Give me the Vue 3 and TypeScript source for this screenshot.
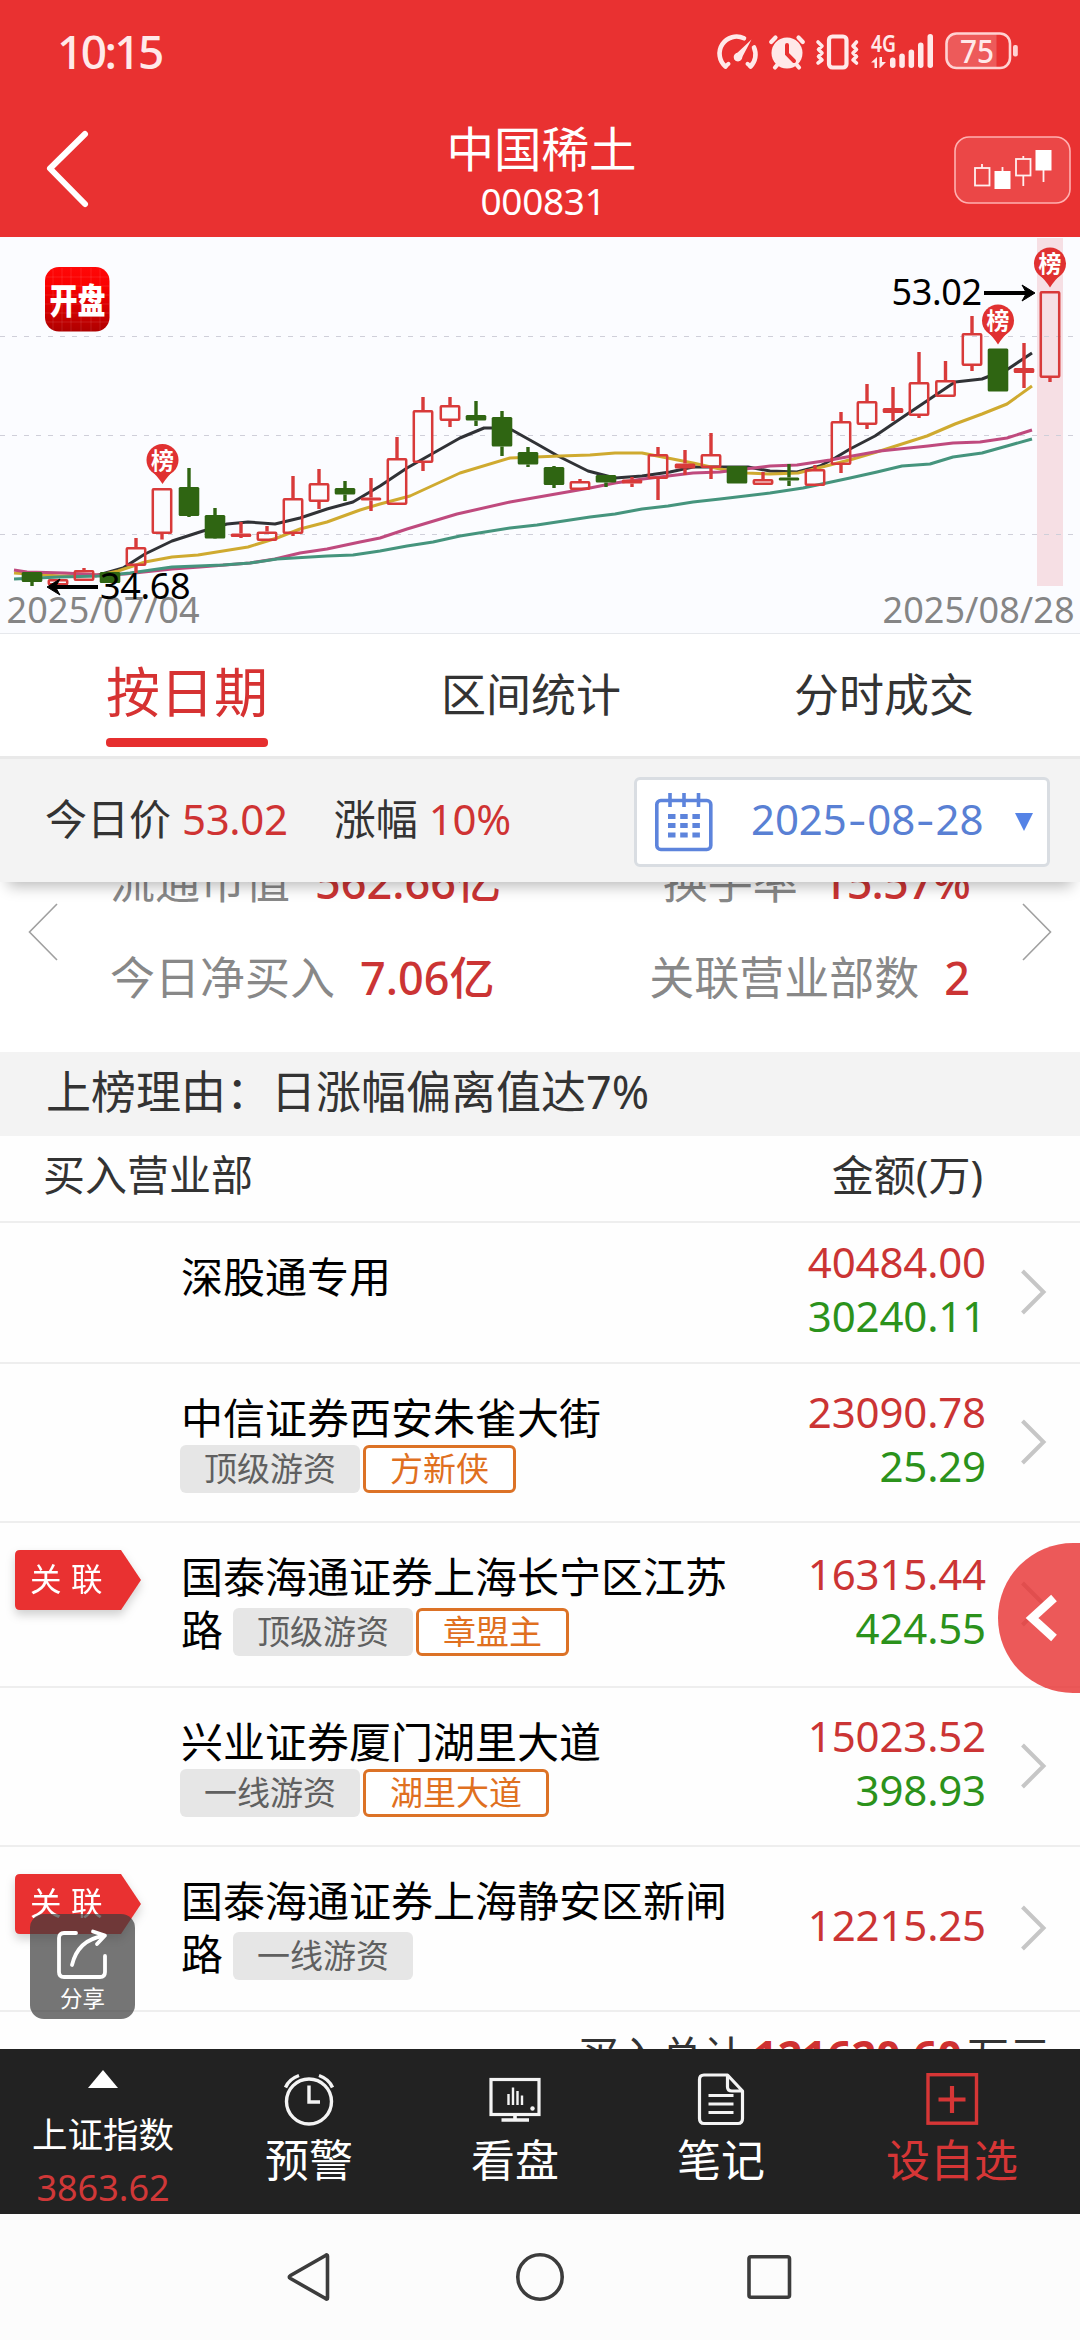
<script setup lang="ts">
type Kind = 'up' | 'down'
interface Candle { x: number; kind: Kind; top: number; bottom: number; high: number; low: number; flat?: boolean }

const c = (x: number, kind: Kind, top: number, bottom: number, high = top, low = bottom): Candle =>
  ({ x, kind, top, bottom, high, low, flat: bottom - top < 6 })

const candles: Candle[] = [
  c(32, 'down', 572, 582, 572, 586), c(58, 'up', 579, 585.5), c(84, 'up', 570, 581, 568, 581),
  c(110, 'down', 572, 583), c(136, 'up', 547, 566, 538, 573), c(162, 'up', 488, 534, 488, 539.5),
  c(189, 'down', 487, 516, 468, 517), c(215, 'down', 515, 538.5, 508, 539), c(241, 'up', 533.5, 537, 522, 538),
  c(267, 'up', 531.5, 541, 526, 541), c(293, 'up', 498, 534, 476, 536), c(319, 'up', 483, 502, 469, 509),
  c(345, 'down', 488, 494.5, 481, 501), c(371, 'up', 497.5, 500.5, 478, 511), c(397, 'up', 458, 505, 437, 505),
  c(423, 'up', 410, 463, 397, 471), c(450, 'up', 405, 421, 397, 427), c(476, 'down', 415, 420.5, 401, 426),
  c(502, 'down', 417, 446.5, 411, 456), c(528, 'down', 452, 464.5, 447, 467), c(554, 'down', 467, 485, 466, 488),
  c(580, 'up', 481, 490, 479, 490), c(606, 'down', 475, 482.5, 475, 487), c(632, 'up', 479.5, 483.5, 477, 487),
  c(658, 'up', 454, 479, 447, 500), c(685, 'up', 463.5, 468.5, 450, 475), c(711, 'up', 454, 468, 433, 479),
  c(737, 'down', 466, 483.5), c(763, 'up', 479, 485, 472, 485), c(789, 'down', 477.5, 480.5, 464, 486),
  c(815, 'up', 469, 486, 465, 486), c(841, 'up', 421, 465, 412, 473), c(867, 'up', 401, 425, 384, 429),
  c(893, 'up', 408, 413, 387, 421), c(919, 'up', 382, 416, 352, 418), c(945.5, 'up', 380, 397, 361, 397),
  c(972, 'up', 333, 366, 316, 371), c(998, 'down', 348.5, 391.5), c(1024, 'up', 368, 373, 343, 388),
  c(1050, 'up', 291, 378, 291, 382),
]

const averages = [
  { color: '#303236', points: '95,576 123,568 145,554 172,541 203,531 227,524 248,522 275,524 300,518 327,509 353,502 380,486 407,468 460,438 484,428 493,428 512,430 537,444 558,456 588,471 615,478 642,476 670,472 693,467 720,467 748,467 770,471 797,472 820,466 835,458 850,449 875,436 900,419 955,382 982,379 1008,369 1032,353' },
  { color: '#cfaa30', points: '14,573 60,576 100,575 118,571 145,562 172,557 198,555 248,547 277,538 300,529 327,522 360,510 380,504 410,496 460,473 510,458 560,456 590,455 615,453 642,453 693,463 720,469 747,473 770,474 798,473 830,465 853,459 880,451 927,436 955,424 982,414 1007,404 1032,386' },
  { color: '#bf4a7e', points: '14,570 27,572 65,573 100,575 125,574 172,569 200,567 250,563 275,559 300,553 327,549 360,542 380,538 407,529 457,514 510,502 590,488 615,483 643,479 693,473 720,472 770,466 797,465 830,460 880,451 928,446 953,443 980,442 1007,438 1032,430' },
  { color: '#45947d', points: '14,579 60,577 100,576 130,573 172,567 223,565 250,563 277,559 327,556 353,555 380,551 407,546 433,542 460,536 510,528 537,525 590,517 615,514 642,509 668,506 693,502 720,499 770,493 803,488 850,478 877,472 902,466 930,464 953,457 982,453 1007,446 1032,439' },
]

const pins = [{ x: 162.5, y: 460 }, { x: 998, y: 320.5 }, { x: 1050, y: 263.5 }]

interface Office { name: string; tail?: string; linked?: boolean; rank?: string; trader?: string; buy: string; sell?: string; height: number }
const offices: Office[] = [
  { name: '深股通专用', buy: '40484.00', sell: '30240.11', height: 141 },
  { name: '中信证券西安朱雀大街', rank: '顶级游资', trader: '方新侠', buy: '23090.78', sell: '25.29', height: 159 },
  { name: '国泰海通证券上海长宁区江苏', tail: '路', linked: true, rank: '顶级游资', trader: '章盟主', buy: '16315.44', sell: '424.55', height: 165 },
  { name: '兴业证券厦门湖里大道', rank: '一线游资', trader: '湖里大道', buy: '15023.52', sell: '398.93', height: 159 },
  { name: '国泰海通证券上海静安区新闸', tail: '路', linked: true, rank: '一线游资', buy: '12215.25', height: 165 },
]
</script>

<template>
  <div class="screen">
    <header class="top">
      <div class="status">
        <span class="time">10:15</span>
        <div class="sys">
          <svg class="gauge" width="40" height="36" viewBox="0 0 40 36" fill="none" stroke="#ffe9e9" stroke-width="4.6" stroke-linecap="round">
            <path d="M7.500 32.500 A17 17 0 0 1 26 4.300" /><path d="M36 13.500 A17 17 0 0 1 32.500 32.500" /><path d="M7.500 32.500 L10.500 29.800 M32.500 32.500 L29.500 29.800" stroke-width="4" />
            <path d="M33.500 5.500 L23.500 24.500 A3.800 3.800 0 1 1 17.500 20.500 Z" fill="#ffe9e9" stroke="none" />
            <circle cx="20" cy="23" r="4.300" fill="#ffe9e9" stroke="none" />
          </svg>
          <svg class="alarm" width="36" height="36" viewBox="0 0 36 36" fill="none" stroke="#ffe9e9" stroke-width="4.200" stroke-linecap="round">
            <circle cx="18" cy="19" r="15.500" fill="#ffe9e9" stroke="none" /><path d="M2.200 8 L6.500 3.500 M33.800 8 L29.500 3.500 M6 33.500 L9 30 M30 33.500 L27 30" />
            <path d="M18 11 V20 L25 27" stroke="#e93131" stroke-width="4" />
          </svg>
          <svg class="vibrate" width="43" height="36" viewBox="0 0 43 36" fill="none" stroke="#ffe9e9" stroke-width="3.600" stroke-linecap="round" stroke-linejoin="round">
            <rect x="13" y="2.500" width="17.500" height="31" rx="3.500" stroke-width="4.200" />
            <path d="M2 8 L6 12 L2.500 15.500 L6 19 L2.500 22.500 L6 26 L2 29 M40.500 8 L37 12 L40.500 15.500 L37 19 L40.500 22.500 L37 26 L40.500 29" />
          </svg>
          <svg class="signal" width="63" height="36" viewBox="0 0 63 36" fill="#ffe9e9">
            <text x="0" y="17.500" class="net" textLength="25" lengthAdjust="spacingAndGlyphs">4G</text>
            <path d="M0 28.500 L6 23 V34 H3.500 V28.500 Z M8.500 23 H11 V28 H15 L9 34 H8.500 Z" />
            <rect x="19" y="23.500" width="5.500" height="10.500" rx="2.700" /><rect x="28.300" y="19.500" width="5.500" height="14.500" rx="2.700" />
            <rect x="37.600" y="15.500" width="5.500" height="18.500" rx="2.700" /><rect x="47" y="8.500" width="5.500" height="25.500" rx="2.700" />
            <rect x="56.500" y="0" width="5.500" height="34" rx="2.700" />
          </svg>
          <svg class="battery" width="74" height="38" viewBox="0 0 74 38">
            <path d="M12 2 H51.500 V36 H12 A10 10 0 0 1 2 26 V12 A10 10 0 0 1 12 2 Z" fill="#fff" opacity=".2" />
            <rect x="1.500" y="1.500" width="63.500" height="34.500" rx="10" fill="none" stroke="#ffd2d2" stroke-width="2.600" />
            <rect x="68" y="13" width="4.800" height="11.500" rx="2" fill="#ffd2d2" />
            <text x="15" y="30.500" class="level" textLength="34" lengthAdjust="spacingAndGlyphs">75</text>
          </svg>
        </div>
      </div>
      <div class="title-bar">
        <svg class="back" width="46" height="80" viewBox="0 0 46 80"><path d="M40 5 L5 39.500 L40 75" fill="none" stroke="#fff" stroke-width="6" stroke-linecap="round" stroke-linejoin="round" /></svg>
        <div class="stock"><h1>中国稀土</h1><p>000831</p></div>
        <svg class="kline" width="117" height="68" viewBox="0 0 117 68">
          <rect x="1" y="1" width="115" height="66" rx="14" fill="#fff" fill-opacity=".11" stroke="#ffb0b0" stroke-width="1.600" />
          <g fill="none" stroke="#fff0f0" stroke-width="1.800"><rect x="21" y="32" width="14.500" height="17.500" /><path d="M28 28 V32" /><rect x="62" y="23" width="14.500" height="16.500" /><path d="M69.300 20 V23 M69.300 39.500 V50 M48.500 31 V36 M89.500 30 V46" /></g>
          <rect x="40.500" y="35" width="16" height="18" fill="#fff" /><rect x="81.500" y="14" width="16" height="20.500" fill="#fff" />
        </svg>
      </div>
    </header>

    <section class="chart">
      <svg width="1080" height="397" viewBox="0 237 1080 397">
        <defs>
          <linearGradient id="logo" x1="0" y1="0" x2="0" y2="1"><stop offset="0" stop-color="#ff0808" /><stop offset=".3" stop-color="#fa0000" /><stop offset="1" stop-color="#ae0000" /></linearGradient>
        </defs>
        <rect x="1037" y="238" width="26" height="348" fill="#f6dfe4" />
        <path d="M0 336.500 H1075 M0 435.500 H1075 M0 534.500 H1075" stroke="#cfcfd9" stroke-width="1.200" stroke-dasharray="5 7" />
        <rect x="45" y="267" width="64.500" height="64.500" rx="14" fill="url(#logo)" />
        <path d="M53 269 V330 M62 268 V331 M71 268 V331 M81 268 V331 M91 268 V331 M100 269 V330 M46 277 H109 M45 286 H109 M45 295 H109 M45 304 H109 M45 313 H109 M46 322 H109" stroke="#fff" stroke-opacity=".1" stroke-width="1" />
        <g transform="translate(77.500 313.500) scale(1 1.270)"><text class="logo-text" text-anchor="middle">开盘</text></g>
        <polyline v-for="a in averages" :key="a.color" :points="a.points" :stroke="a.color" fill="none" stroke-width="3" stroke-linejoin="round" />
        <g v-for="k in candles" :key="k.x" :stroke="k.kind === 'up' ? '#d83a3a' : '#2f6512'" fill="none">
          <path :d="`M${k.x} ${k.high} V${k.top} M${k.x} ${k.bottom} V${k.low}`" stroke-width="3.400" />
          <rect v-if="k.kind === 'up' && !k.flat" :x="k.x - 9.200" :y="k.top + 1.200" width="18.400" :height="k.bottom - k.top - 2.400" rx=".8" stroke-width="2.500" />
          <rect v-else :x="k.x - 10.300" :y="k.top" width="20.600" :height="k.bottom - k.top" rx="1.500" :fill="k.kind === 'up' ? '#d83a3a' : '#2f6512'" stroke="none" />
        </g>
        <g v-for="p in pins" :key="p.x">
          <path :d="`M${p.x - 13.500} ${p.y + 8.500} Q${p.x - 5} ${p.y + 16} ${p.x} ${p.y + 24} Q${p.x + 5} ${p.y + 16} ${p.x + 13.500} ${p.y + 8.500} Z`" fill="#e03131" />
          <circle :cx="p.x" :cy="p.y" r="16" fill="#e03131" />
          <text :x="p.x" :y="p.y + 8.500" text-anchor="middle" class="pin-text">榜</text>
        </g>
        <g fill="none" stroke="#000" stroke-width="3.800"><path d="M98 587 H51" /><path d="M984 293 H1031" /></g>
        <path d="M47 587 L60 579 L55.500 587 L60 595 Z M1035 293 L1022 285 L1026.500 293 L1022 301 Z" stroke="#000" stroke-width="1" />
        <text x="6.500" y="622.500" class="date" textLength="193">2025/07/04</text>
        <text x="882.500" y="622.500" class="date" textLength="192">2025/08/28</text>
        <text x="100" y="598.500" class="price" textLength="90.500">34.68</text>
        <text x="891.500" y="304.500" class="price" textLength="90.500">53.02</text>
      </svg>
    </section>

    <nav class="tabs"><span class="on">按日期</span><span>区间统计</span><span>分时成交</span></nav>

    <section class="summary">
      <p>今日价 <b>53.02</b></p><p class="rise">涨幅 <b>10%</b></p>
      <div class="picker">
        <svg width="60" height="60" viewBox="0 0 60 60" fill="none" stroke="#5d84dc" stroke-width="3.600">
          <rect x="2.800" y="8.500" width="54" height="49" rx="4" /><path d="M16 1 V15 M30 1 V15 M44.500 1 V15" />
          <path d="M14 24.500 H58 M14 33.500 H58 M14 43 H58" stroke-width="5.200" stroke-dasharray="7.500 4.700 7.500 4.700 7.500 30" />
        </svg>
        <span class="day">2025<i>-</i>08<i>-</i>28</span>
        <svg width="18" height="18" viewBox="0 0 18 18"><path d="M0 0 H18 L9 18 Z" fill="#5583e6" /></svg>
      </div>
    </section>

    <section class="stats">
      <svg width="30" height="60" viewBox="0 0 30 60"><path d="M29 2 L1.500 30 L29 58" fill="none" stroke="#a0a0a0" stroke-width="1.600" /></svg>
      <div class="cols">
        <div><p>流通市值<b>562.66亿</b></p><p>今日净买入<b>7.06亿</b></p></div>
        <div class="right"><p>换手率<b class="ratio">15.57%</b></p><p>关联营业部数<b>2</b></p></div>
      </div>
      <svg width="30" height="60" viewBox="0 0 30 60"><path d="M1 2 L28.500 30 L1 58" fill="none" stroke="#a0a0a0" stroke-width="1.600" /></svg>
    </section>

    <section class="reason">上榜理由：日涨幅偏离值达7%</section>
    <div class="thead"><span>买入营业部</span><span>金额(万)</span></div>

    <main class="list">
      <article v-for="o in offices" :key="o.name" class="row" :style="{ height: o.height + 'px' }">
        <div class="mark">
          <div v-if="o.linked" class="flag">
            <svg width="126" height="60" viewBox="0 0 126 60"><path d="M5 0 H106 L126 30 L106 60 H5 Q0 60 0 55 V5 Q0 0 5 0 Z" fill="#e93131" /></svg>
            <span>关联</span>
          </div>
        </div>
        <div class="office">
          <div class="name">{{ o.name }}</div>
          <div v-if="o.rank" class="tags" :class="{ wrapped: o.tail }">
            <span v-if="o.tail" class="tail">{{ o.tail }}</span>
            <span class="tag">{{ o.rank }}</span>
            <span v-if="o.trader" class="tag trader">{{ o.trader }}</span>
          </div>
        </div>
        <div class="money"><span class="buy">{{ o.buy }}</span><span v-if="o.sell" class="sell">{{ o.sell }}</span></div>
        <svg class="more" width="28" height="46" viewBox="0 0 28 46"><path d="M2.500 2 L23.500 23 L2.500 44" fill="none" stroke="#c6c6c6" stroke-width="4" /></svg>
      </article>
      <div class="total">买入总计<b>121620.60</b>万元</div>
      <button class="drawer" aria-label="展开">
        <svg width="82" height="150" viewBox="0 0 82 150"><path d="M56 55 L34 75 L56 95" fill="none" stroke="#fff" stroke-width="8.500" /></svg>
      </button>
      <button class="share">
        <svg width="54" height="52" viewBox="0 0 54 52" fill="none" stroke="#fff" stroke-width="3.800" stroke-linecap="round" stroke-linejoin="round">
          <path d="M20 4 H8 Q3 4 3 9 V43 Q3 48 8 48 H44 Q49 48 49 43 V27" /><path d="M16 36 Q22 11 47 7" /><path d="M37 2.500 L49 6.500 L41 15" />
        </svg>
        <span>分享</span>
      </button>
    </main>

    <footer class="dock">
      <div class="index"><svg width="30" height="18" viewBox="0 0 30 18"><path d="M0 18 L15 0 L30 18 Z" fill="#fff" /></svg><span>上证指数</span><b>3863.62</b></div>
      <div class="item">
        <svg width="54" height="54" viewBox="0 0 54 54" fill="none" stroke="#f4f4f4" stroke-width="3.400">
          <circle cx="27" cy="29.500" r="22.500" /><path d="M27 13.500 V30 H38" /><path d="M3.500 15.500 Q7 7 17 3.500 M50.500 15.500 Q47 7 37 3.500" />
        </svg><span>预警</span>
      </div>
      <div class="item">
        <svg width="54" height="54" viewBox="0 0 54 54" fill="none" stroke="#f4f4f4" stroke-width="3.200">
          <rect x="3" y="7.500" width="48" height="35" /><path d="M27 42 V47 M13.500 48 H41" stroke-width="3.600" /><path d="M20.500 22 V33 M25 15.500 V33 M29.500 19 V33 M34 23.500 V33" stroke-width="2.400" /><circle cx="44.500" cy="36.500" r="2.200" fill="#f4f4f4" stroke="none" />
        </svg><span>看盘</span>
      </div>
      <div class="item">
        <svg width="54" height="54" viewBox="0 0 54 54" fill="none" stroke="#f4f4f4" stroke-width="3.200" stroke-linejoin="round">
          <path d="M10 3 H33.500 L48.500 19 V46.500 Q48.500 51.500 44 51.500 H10 Q5.500 51.500 5.500 46.500 V7.500 Q5.500 3 10 3 Z M33.500 3 V15 Q33.500 19 38 19 H48.500" /><path d="M14.500 23.500 H39.500 M14.500 32 H39.500 M14.500 40.500 H39.500" />
        </svg><span>笔记</span>
      </div>
      <div class="item add">
        <svg width="54" height="54" viewBox="0 0 54 54" fill="none" stroke="#d63636" stroke-width="3.400"><rect x="3" y="2.700" width="48.500" height="48.500" /><path d="M27 14 V41 M13.500 27.500 H40.500" stroke-width="4.200" /></svg><span>设自选</span>
      </div>
    </footer>
    <div class="sysnav">
      <svg width="50" height="50" viewBox="0 0 50 50"><path d="M41.500 4 V46 Q41.500 48 39.500 46.500 L4.500 26.500 Q2 25 4.500 23.500 L39.500 3.500 Q41.500 2 41.500 4 Z" fill="none" stroke="#3c3c3c" stroke-width="3.600" /></svg>
      <svg width="50" height="50" viewBox="0 0 50 50"><circle cx="25" cy="25" r="22.200" fill="none" stroke="#3c3c3c" stroke-width="3.600" /></svg>
      <svg width="50" height="50" viewBox="0 0 50 50"><rect x="5" y="4.800" width="40.500" height="40.500" rx="2" fill="none" stroke="#3c3c3c" stroke-width="3.600" /></svg>
    </div>
  </div>
</template>

<style>
body { margin: 0; background: #fff; }
</style>

<style scoped>
* { box-sizing: border-box; }
h1, p { margin: 0; font-weight: 400; }
b, i { font-weight: 400; font-style: normal; }
svg { display: block; flex: none; }
button { border: 0; padding: 0; font: inherit; }
.screen { width: 1080px; height: 2340px; display: flex; flex-direction: column; overflow: hidden; background: #fefefe; font-family: "Noto Sans", "Noto Sans CJK SC", sans-serif; color: #333; white-space: nowrap; }
.screen > * { flex: none; }

.top { height: 237px; background: #e93131; color: #fff; display: flex; flex-direction: column; }
.status { height: 104px; padding: 0 61px 0 57px; display: flex; align-items: center; justify-content: space-between; }
.time { font-size: 46px; font-weight: 500; line-height: 60px; margin-bottom: 2px; letter-spacing: -2.600px; color: #ffe9e9; }
.sys { display: flex; align-items: flex-start; height: 38px; margin-bottom: 3px; }
.sys svg { overflow: visible; }
.gauge, .alarm, .signal { margin: 2px 11px 0 0; }
.vibrate { margin: 2px 12px 0 0; }
.net { font-size: 24px; font-weight: 600; }
.level { font-size: 33px; font-weight: 500; fill: #ffe9e9; }
.title-bar { height: 132px; padding: 0 9px 0 45px; display: flex; align-items: flex-start; }
.back { margin-top: 25px; }
.stock { flex: 1; margin: 12px 0 0 41px; text-align: center; }
.stock h1 { font-size: 47.500px; line-height: 66px; margin-left: -3px; }
.stock p { font-size: 37px; line-height: 38px; letter-spacing: -.3px; }
.kline { margin-top: 32px; }

.chart { height: 397px; background: #fbfcff; border-bottom: 1px solid #e6e8ec; overflow: hidden; }
.logo-text { font-size: 28px; font-weight: 900; fill: #fff; }
.pin-text { font-size: 23px; font-weight: 700; fill: #fff; }
.date { font-size: 36px; fill: #858585; }
.price { font-size: 36px; fill: #000; }

.tabs { height: 122px; padding: 0 106px; display: flex; justify-content: space-between; background: #fff; font-size: 45px; line-height: 121px; }
.tabs .on { height: 113px; line-height: 116px; font-size: 54px; color: #d63232; position: relative; }
.tabs .on::after { content: ""; position: absolute; left: 0; right: 0; bottom: 0; height: 9px; border-radius: 4px; background: #e62f2f; }

.summary { height: 126px; padding: 0 30px 0 45px; display: flex; align-items: center; background: #f3f3f3; border-top: 3px solid #e9e9e9; font-size: 42px; line-height: 60px; position: relative; z-index: 1; box-shadow: 0 12px 14px -8px rgba(0, 0, 0, .28); }
.summary p { margin-bottom: 4px; }
.summary b { color: #cf3333; letter-spacing: -.3px; }
.summary .rise { margin-left: 46px; }
.picker { margin: 2px 0 0 auto; width: 416px; height: 90px; border: 3px solid #d9dde2; border-radius: 6px; background: #fff; display: flex; align-items: center; padding: 0 14px 0 17px; color: #5980d4; }
.picker .day { margin: 0 auto 5px 37px; letter-spacing: -.1px; }
.day i { display: inline-block; width: 20.500px; text-align: center; transform: scaleX(1.350); }

.stats { height: 170px; padding: 0 28px; display: flex; align-items: flex-start; background: #fff; }
.stats > svg { margin-top: 20px; }
.cols { flex: 1; display: flex; justify-content: space-between; margin-top: -48px; padding: 0 52px; font-size: 45px; line-height: 96px; color: #888; }
.right { text-align: right; }
.cols b { margin-left: 25px; color: #cb3434; font-weight: 500; }
.cols b.ratio { margin-left: 24px; letter-spacing: -.900px; }

.reason { height: 84px; padding-left: 46px; background: #f3f3f3; font-size: 45px; line-height: 80px; }
.thead { height: 87px; padding: 0 97px 0 43px; display: flex; justify-content: space-between; border-bottom: 2px solid #eee; font-size: 42px; line-height: 77px; }

.list { height: 826px; position: relative; overflow: hidden; }
.row { display: flex; border-bottom: 2px solid #eee; font-size: 42px; line-height: 54px; }
.mark { width: 180px; padding: 27px 0 0 15px; }
.flag { width: 126px; display: grid; filter: drop-shadow(0 5px 5px rgba(0, 0, 0, .18)); }
.flag > * { grid-area: 1 / 1; }
.flag span { font-size: 31.500px; line-height: 58px; letter-spacing: 9.500px; color: #fff; padding-left: 15px; }
.office { width: 560px; padding-top: 27px; color: #000; }
.name { padding-left: 1px; }
.tags { display: flex; align-items: center; gap: 3px; height: 48px; }
.tags.wrapped { height: 54px; padding-top: 1px; }
.tail { margin: 0 7px 3px 1px; }
.tag { height: 48px; padding: 0 24px; border-radius: 6px; background: #e6e6e6; color: #606060; font-size: 33px; line-height: 47px; }
.trader { border: 3px solid #dc7226; background: #fff; color: #e0701f; line-height: 41px; }
.money { flex: 1; padding: 0 97px 7px 0; margin-right: -63px; display: flex; flex-direction: column; align-items: flex-end; justify-content: center; letter-spacing: -.150px; }
.buy { color: #cb3434; }
.sell { color: #2b921b; }
.more { align-self: center; margin: 0 32px 2px 0; }
.total { padding-right: 29px; text-align: right; font-size: 42px; line-height: 87px; }
.total b { font-weight: 700; font-size: 43px; color: #cf3131; margin: 0 5px 0 8px; }
.drawer { position: absolute; right: 0; top: 320px; width: 82px; height: 150px; border-radius: 75px 0 0 75px; background: rgba(231, 47, 47, .8); }
.share { position: absolute; left: 30px; top: 691px; width: 105px; height: 105px; border-radius: 14px; background: rgba(59, 59, 59, .705); color: #fff; display: flex; flex-direction: column; align-items: center; padding-top: 15px; font-size: 22.500px; line-height: 36px; }

.dock { height: 165px; background: #222; color: #fff; display: flex; }
.dock > div { width: 206px; display: flex; flex-direction: column; align-items: center; }
.index { padding-top: 21px; }
.index span { font-size: 35.500px; line-height: 54px; margin-top: 19px; }
.index b { font-size: 36px; line-height: 54px; color: #d03838; }
.item { padding-top: 23px; font-size: 44px; line-height: 60px; }
.item span { margin-top: 4px; }
.dock > .add { width: 256px; color: #d63636; }
.sysnav { height: 126px; background: #fcfcfc; display: flex; justify-content: center; gap: 179px; padding-top: 38px; }
</style>
